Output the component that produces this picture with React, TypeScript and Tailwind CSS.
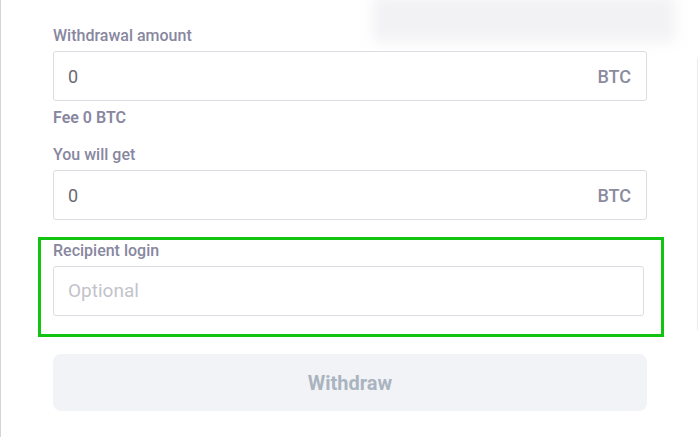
import React from "react";

const Field = ({ value, suffix }: { value: string; suffix?: string }) => (
  <div className="flex h-[50px] items-center justify-between rounded-[3px] border border-[#dcdce3] bg-white pl-[14px] pr-[15px]">
    <span className="text-[18px] text-[#6a6a72]">{value}</span>
    {suffix && <span className="text-[18px] font-medium text-[#8b8b9f]">{suffix}</span>}
  </div>
);

const Label = ({ children }: { children: React.ReactNode }) => (
  <div className="mb-[5px] text-[16px] leading-[20px] font-medium text-[#88879f]">{children}</div>
);

export default function App() {
  return (
    <div className="relative h-[437px] w-[698px] overflow-hidden border-l border-[#d4d4d8] bg-white font-['Roboto',sans-serif]">
      <div className="absolute left-[372px] top-[-4px] h-[46px] w-[302px] bg-[#f2f2f5] blur-[7px]" />
      <div className="absolute right-0 top-[58px] h-[272px] w-px bg-[#ececef]" />

      <div className="relative ml-[52px] w-[594px] pt-[26px]">
        <Label>Withdrawal amount</Label>
        <Field value="0" suffix="BTC" />

        <div className="mt-[7px] text-[16px] leading-[20px] font-semibold text-[#88879f]">Fee 0 BTC</div>

        <div className="mt-[17px]">
          <Label>You will get</Label>
          <Field value="0" suffix="BTC" />
        </div>

        <div className="-ml-[15px] mt-[17px] w-[626px] border-[3px] border-[#12c312] pb-[18px] pl-[12px] pr-[17px] pt-px">
          <Label>Recipient login</Label>
          <div className="flex h-[50px] items-center rounded-[3px] border border-[#dcdce3] bg-white pl-[14px]">
            <span className="text-[19px] text-[#c3c3cb]">Optional</span>
          </div>
        </div>

        <button className="mt-[17px] flex h-[57px] w-full items-center justify-center rounded-[8px] bg-[#f2f3f6] text-[20px] font-bold text-[#aab4c0]">
          Withdraw
        </button>
      </div>
    </div>
  );
}
